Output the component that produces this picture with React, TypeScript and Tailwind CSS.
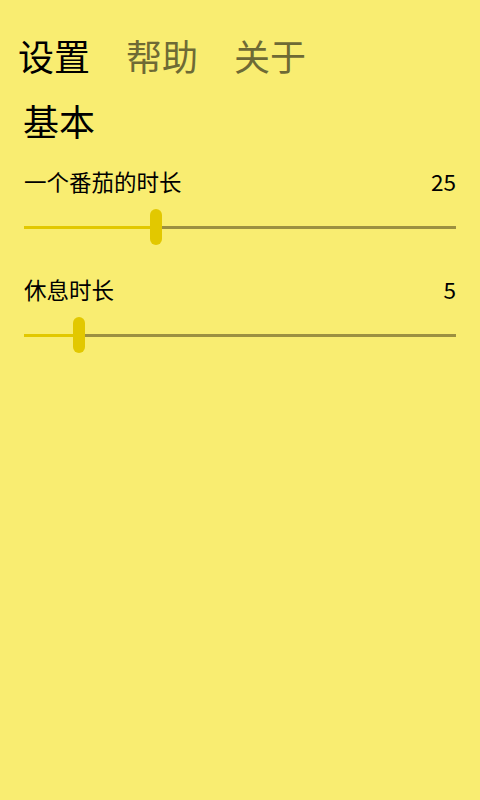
import React from "react";

type SliderRowProps = { label: string; value: number; thumb: number };

function SliderRow({ label, value, thumb }: SliderRowProps) {
  return (
    <div className="px-6">
      <div className="flex items-center justify-between h-[28px] text-[22.5px] leading-[28px] text-black">
        <span>{label}</span>
        <span>{value}</span>
      </div>
      <div className="flex items-center h-[36px] mt-[14px]">
        <div className="h-[3px] bg-[#e2c800]" style={{ width: thumb }}></div>
        <div className="w-[12px] h-[36px] rounded-full bg-[#e2c800] shrink-0"></div>
        <div className="h-[3px] flex-1 bg-[#9c9040]"></div>
      </div>
    </div>
  );
}

export default function App() {
  return (
    <div
      className="w-[480px] h-[800px] bg-[#f9ed71] overflow-hidden"
      style={{ fontFamily: '"Noto Sans CJK SC", "Noto Sans", sans-serif' }}
    >
      <div className="flex gap-[36px] pl-[18px] pt-[35px] text-[36px] leading-[40px]">
        <span className="text-black">设置</span>
        <span className="text-[#6e6a35]">帮助</span>
        <span className="text-[#6e6a35]">关于</span>
      </div>
      <div className="pl-[23px] mt-[25px] text-[36px] leading-[40px] text-black">基本</div>
      <div className="mt-[27px] flex flex-col gap-[30px]">
        <SliderRow label="一个番茄的时长" value={25} thumb={126} />
        <SliderRow label="休息时长" value={5} thumb={49} />
      </div>
    </div>
  );
}
